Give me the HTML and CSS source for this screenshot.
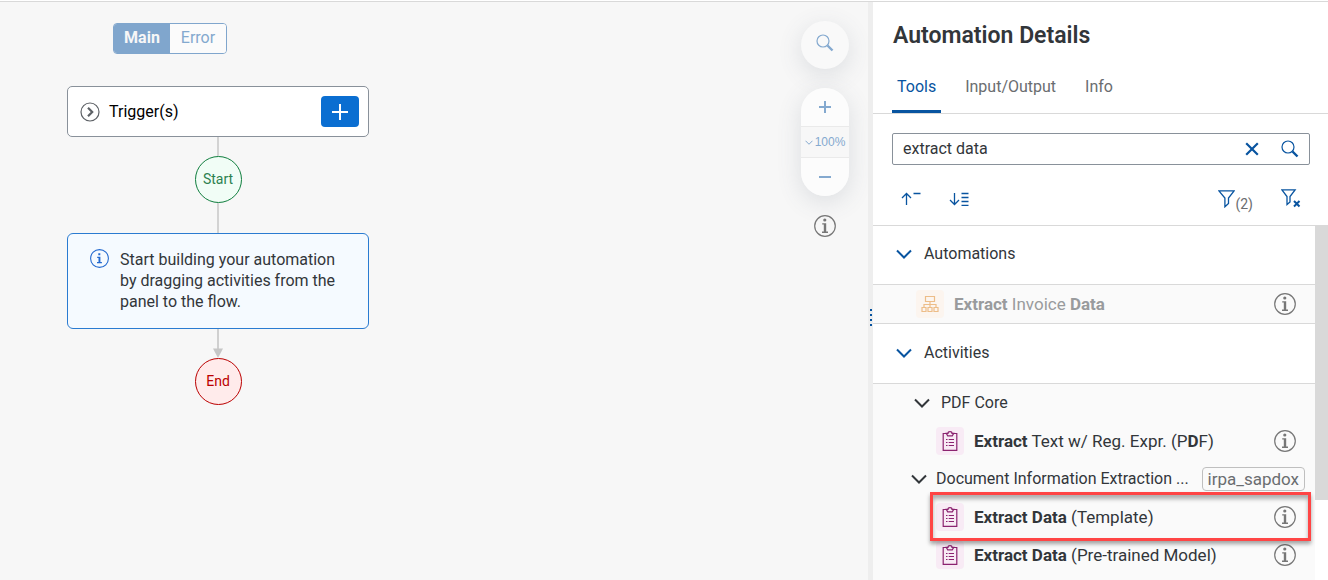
FILE: index.html
```html
<!DOCTYPE html>
<html lang="en">
<head>
<meta charset="utf-8">
<title>Automation Details</title>
<link rel="stylesheet" href="styles.css">
</head>
<body>
<svg class="defs" aria-hidden="true">
  <symbol id="search" viewBox="0 0 18 18"><circle cx="7" cy="7" r="6" fill="none" stroke="currentColor" stroke-width="1.2"/><path d="M11.5 11.5L16.5 16.5" fill="none" stroke="currentColor" stroke-width="2.4"/></symbol>
  <symbol id="info" viewBox="0 0 22 22"><circle cx="11" cy="11" r="10.3" fill="none" stroke="currentColor" stroke-width="1.2"/><circle cx="10.8" cy="5" r="1.6" fill="currentColor"/><path d="M8.200 8.300h4v8.300h1.800v1.300h-6v-1.300h1.800V9.600H8.200z" fill="currentColor"/></symbol>
  <symbol id="chevron" viewBox="0 0 16 10"><path d="M1 1.5L8 8.5L15 1.5" fill="none" stroke="currentColor" stroke-width="2"/></symbol>
  <symbol id="clipboard" viewBox="0 0 16 20"><path d="M4.500 2.500H1.200V19.300H14.800V2.500H11.500" fill="none" stroke="currentColor" stroke-width="1.200"/><path d="M4.300 2.400H6c0-2.400 4-2.400 4 0h1.700L10.300 4.800H5.700z" fill="none" stroke="currentColor" stroke-width="1.200"/><path d="M4 8.500h1.500M4 11.500h1.500M4 14.500h1.500M6.700 8.500H12M6.700 11.500H12M6.700 14.500H12" fill="none" stroke="currentColor" stroke-width="1.200"/></symbol>
  <symbol id="funnel" viewBox="0 0 17 18"><path d="M.9.800H16.100L10.500 8V13.400L6.900 16.800V8z" fill="none" stroke="currentColor" stroke-width="1.300"/></symbol>
</svg>
<div class="app">
  <main class="canvas">
    <section class="flow">
      <div class="toggle">
        <button class="toggle-item selected">Main</button>
        <button class="toggle-item">Error</button>
      </div>
      <div class="trigger">
        <button class="icon-button" aria-label="Expand triggers"><svg width="20" height="20" viewBox="0 0 20 20"><circle cx="10" cy="10" r="9" fill="none" stroke="currentColor" stroke-width="1.2"/><path d="M8 5.800L12.200 10L8 14.200" fill="none" stroke="currentColor" stroke-width="2.200"/></svg></button>
        <span class="trigger-label">Trigger(s)</span>
        <button class="add" aria-label="Add trigger"><svg width="18" height="18" viewBox="0 0 18 18"><path d="M9 1V17M1 9H17" stroke="currentColor" stroke-width="2"/></svg></button>
      </div>
      <div class="line line-short"></div>
      <div class="node start">Start</div>
      <div class="line"></div>
      <div class="hint">
        <svg class="hint-icon" width="19" height="19" viewBox="0 0 19 19"><circle cx="9.500" cy="9.500" r="8.900" fill="none" stroke="currentColor" stroke-width="1.100"/><path d="M8.300 4.200h2v2h-2zM7.200 7.700h3.200v5.300h1.500v1.300H7v-1.300h1.500V9H7.200z" fill="currentColor"/></svg>
        <p class="hint-text">Start building your automation by dragging activities from the panel to the flow.</p>
      </div>
      <svg class="arrow" width="10" height="29" viewBox="0 0 10 29"><path d="M5 0V22" stroke="#d0d0d0" stroke-width="2"/><path d="M0 19.500H10L5 29z" fill="#c6c6c6"/></svg>
      <div class="node end">End</div>
    </section>
    <aside class="tools">
      <button class="round" aria-label="Search"><svg width="18" height="18"><use href="#search"/></svg></button>
      <div class="zoom">
        <button class="zoom-step" aria-label="Zoom in"><svg width="14" height="14" viewBox="0 0 14 14"><path d="M7 1V13M1 7H13" stroke="currentColor" stroke-width="2"/></svg></button>
        <button class="zoom-level"><svg width="8" height="5"><use href="#chevron"/></svg>100%</button>
        <button class="zoom-step" aria-label="Zoom out"><svg width="14" height="14" viewBox="0 0 14 14"><path d="M1 7H13" stroke="currentColor" stroke-width="2"/></svg></button>
      </div>
      <button class="icon-button" aria-label="Information"><svg width="22" height="22"><use href="#info"/></svg></button>
    </aside>
  </main>
  <div class="splitter"><span class="grip"></span></div>
  <section class="panel">
    <h1 class="title">Automation Details</h1>
    <nav class="tabs">
      <a class="tab active" href="#tools">Tools</a>
      <a class="tab" href="#io">Input/Output</a>
      <a class="tab" href="#about">Info</a>
    </nav>
    <div class="controls">
      <div class="search">
        <input class="search-input" type="text" value="extract data" aria-label="Search tools">
        <button class="icon-button" aria-label="Clear"><svg width="14" height="14" viewBox="0 0 14 14"><path d="M1.200 1.200L12.800 12.800M12.800 1.200L1.200 12.800" stroke="currentColor" stroke-width="2.200"/></svg></button>
        <button class="icon-button" aria-label="Search"><svg width="18" height="18"><use href="#search"/></svg></button>
      </div>
      <div class="toolbar">
        <button class="icon-button" aria-label="Collapse all"><svg width="20" height="14" viewBox="0 0 20 14"><path d="M5.500 13V1.500M1 6L5.500 1.500L10 6M12.500 1.500H19.500" fill="none" stroke="currentColor" stroke-width="1.300"/></svg></button>
        <button class="icon-button expand" aria-label="Expand all"><svg width="20" height="14" viewBox="0 0 20 14"><path d="M5.500 1V12.500M1 8L5.500 12.500L10 8M12.500 1.500H19.500M12.500 5.500H19.500M12.500 9.500H19.500M12.500 13.300H19.500" fill="none" stroke="currentColor" stroke-width="1.300"/></svg></button>
        <button class="icon-button filter"><svg width="17" height="18"><use href="#funnel"/></svg><span class="count">(2)</span></button>
        <button class="icon-button" aria-label="Clear filter"><svg width="20" height="20" viewBox="0 0 20 20"><path d="M.9.800H14.100L9 7.500V13L6 15.600V7.500z" fill="none" stroke="currentColor" stroke-width="1.300"/><path d="M13 12L18.500 17.500M18.500 12L13 17.500" stroke="currentColor" stroke-width="2"/></svg></button>
      </div>
    </div>
    <div class="results">
      <div class="list">
        <button class="group"><svg class="chevron" width="16" height="10"><use href="#chevron"/></svg>Automations</button>
        <div class="item disabled">
          <span class="tile orange"><svg width="18" height="18" viewBox="0 0 18 18"><path d="M4.500 1.500h9v5h-9zM9 6.500v6M3 12.500V9.500H15v3M1 12.500h4v4H1zM7 12.500h4v4H7zM13 12.500h4v4h-4z" fill="none" stroke="currentColor" stroke-width="1.200"/></svg></span>
          <span class="name"><b>Extract</b> Invoice <b>Data</b></span>
          <button class="icon-button" aria-label="Details"><svg width="22" height="22"><use href="#info"/></svg></button>
        </div>
        <button class="group"><svg class="chevron" width="16" height="10"><use href="#chevron"/></svg>Activities</button>
        <button class="subgroup core"><svg width="16" height="10"><use href="#chevron"/></svg><span>PDF Core</span></button>
        <div class="item">
          <span class="tile"><svg width="16" height="20"><use href="#clipboard"/></svg></span>
          <span class="name"><b>Extract</b> Text w/ Reg. Expr. (P<b>D</b>F)</span>
          <button class="icon-button" aria-label="Details"><svg width="22" height="22"><use href="#info"/></svg></button>
        </div>
        <button class="subgroup"><svg width="16" height="10"><use href="#chevron"/></svg><span class="sub-name">Document Information Extraction ...</span><span class="badge">irpa_sapdox</span></button>
        <div class="item marked">
          <span class="tile"><svg width="16" height="20"><use href="#clipboard"/></svg></span>
          <span class="name"><b>Extract Data</b> (Template)</span>
          <button class="icon-button" aria-label="Details"><svg width="22" height="22"><use href="#info"/></svg></button>
        </div>
        <div class="item">
          <span class="tile"><svg width="16" height="20"><use href="#clipboard"/></svg></span>
          <span class="name"><b>Extract Data</b> (Pre-trained Model)</span>
          <button class="icon-button" aria-label="Details"><svg width="22" height="22"><use href="#info"/></svg></button>
        </div>
      </div>
      <div class="scrollbar"><div class="thumb"></div></div>
    </div>
  </section>
</div>
</body>
</html>
```
FILE: styles.css
```css
* { box-sizing: border-box; }
body {
  margin: 0;
  padding-top: 1px;
  background: #fff;
  color: #32363a;
  font: 16px/20px Roboto, "Noto Sans", sans-serif;
}
button { margin: 0; padding: 0; border: 0; background: none; font: inherit; color: inherit; }
svg { display: block; flex: none; }
.defs { position: absolute; width: 0; height: 0; }
.app { display: flex; height: calc(100vh - 1px); border-top: 1px solid #d9d9d9; overflow: hidden; }
.icon-button { display: flex; flex: none; color: #0854a0; }

.canvas { display: flex; flex: 1; justify-content: space-between; background: #f7f7f7; padding: 19px 19px 0 67px; }
.flow { display: flex; flex-direction: column; align-items: center; width: 302px; padding-top: 2px; }
.toggle { display: flex; align-self: flex-start; margin-left: 46px; height: 31px; border: 1px solid #80a6cd; border-radius: 4px; overflow: hidden; }
.toggle-item { width: 56px; background: #fbfbfb; color: #84a9cf; padding-bottom: 2px; }
.toggle-item.selected { background: #80a6cd; color: #f7f7f7; font-weight: bold; }
.trigger { display: flex; align-items: center; align-self: stretch; height: 51px; margin-top: 32px; padding: 0 9px 0 12px; background: #fff; border: 1px solid #89919a; border-radius: 5px; }
.trigger .icon-button { color: #5d6166; }
.trigger-label { flex: 1; padding-left: 9px; color: #000; }
.add { display: flex; align-items: center; justify-content: center; width: 38px; height: 31px; border-radius: 4px; background: #0a6ed1; color: #fff; }
.line { width: 2px; height: 30px; background: #d3d3d3; }
.line-short { height: 19px; }
.node { display: flex; align-items: center; justify-content: center; width: 47px; height: 47px; padding-bottom: 2px; border: 1px solid; border-radius: 50%; font-size: 14px; }
.start { background: #f1fdf6; border-color: #107e3e; color: #2d8150; }
.end { background: #ffebeb; border-color: #bb0000; color: #bb0000; }
.hint { display: flex; align-self: stretch; padding: 15px 20px 16px 22px; background: #f5faff; border: 1px solid #2a7bd1; border-radius: 6px; }
.hint-icon { color: #2369cf; }
.hint-text { margin: 0 0 0 11px; line-height: 21px; }

.tools { display: flex; flex-direction: column; align-items: center; gap: 19px; width: 48px; color: #84a9cf; }
.round { display: flex; align-items: center; justify-content: center; width: 48px; height: 48px; padding-bottom: 4px; border-radius: 50%; background: #f9f9f9; box-shadow: 0 6px 24px rgba(80, 95, 110, 0.16); }
.zoom { display: flex; flex-direction: column; width: 48px; border-radius: 24px; overflow: hidden; box-shadow: 0 6px 24px rgba(80, 95, 110, 0.16); }
.zoom-step { display: flex; align-items: center; justify-content: center; height: 38px; background: #fcfcfc; }
.zoom-level { display: flex; align-items: center; justify-content: center; gap: 2px; height: 32px; background: #f7f7f7; border: solid #eaeaea; border-width: 1px 0; font: 12px/16px "Liberation Sans", Arial, sans-serif; }
.tools .icon-button { color: #777; }

.splitter { display: flex; align-items: center; justify-content: center; width: 5px; background: #eee; padding-top: 52px; }
.grip { width: 2px; height: 17px; background: repeating-linear-gradient(#0854a0 0 2px, transparent 2px 5px); }

.panel { display: flex; flex-direction: column; width: 455px; background: #fff; }
.title { margin: 0; padding: 20px 20px 0; font-size: 23px; line-height: 28px; font-weight: 600; }
.tabs { display: flex; gap: 19px; margin-top: 22px; padding: 0 19px; border-bottom: 1px solid #d9d9d9; }
.tab { padding: 5px 5px 13px; color: #6a6d70; text-decoration: none; border-bottom: 3px solid transparent; }
.tab.active { color: #0854a0; border-color: #0854a0; }
.controls { padding: 19px 18px 0 19px; border-bottom: 1px solid #d9d9d9; }
.search { display: flex; align-items: center; height: 32px; border: 1px solid #89919a; border-radius: 2px; padding: 0 10px; gap: 22px; }
.search-input { flex: 1; min-width: 0; border: 0; padding: 0; outline: 0; background: none; font: inherit; color: inherit; }
.toolbar { display: flex; align-items: center; height: 60px; padding: 8px 9px 0; gap: 28px; }
.filter { align-items: center; margin-left: auto; }
.count { align-self: flex-end; height: 14px; color: #6a6d70; font-size: 14px; line-height: 20px; }

.results { display: flex; flex: 1; min-height: 0; }
.list { flex: 1; min-width: 0; background: #fafafa; }
.group { display: flex; align-items: center; width: 100%; height: 59px; padding: 0 23px 2px; gap: 12px; background: #fff; border-bottom: 1px solid #d9d9d9; }
.disabled + .group { height: 60px; }
.chevron { color: #0854a0; }
.item { display: flex; align-items: center; height: 38px; padding: 0 19px 0 63px; position: relative; }
.name { flex: 1; padding-left: 10px; font-size: 17px; white-space: nowrap; }
.item .icon-button { color: #777; }
.tile { display: flex; align-items: center; justify-content: center; width: 28px; height: 28px; border-radius: 4px; background: #f8ebf5; color: #8b2370; }
.disabled { height: 39px; padding-left: 43px; border-bottom: 1px solid #d9d9d9; color: #999b9d; }
.orange { background: #fcf5ef; color: #edbd88; }
.subgroup { display: flex; align-items: center; width: 100%; height: 38px; padding: 0 10px 0 38px; gap: 9px; text-align: left; white-space: nowrap; }
.core { padding-left: 41px; gap: 11px; }
.sub-name { flex: 1; min-width: 0; }
.badge { height: 24px; padding: 0 5px; border: 1px solid #bfbfbf; border-radius: 4px; font-size: 17px; line-height: 22px; color: #6a6d70; }
.marked { z-index: 1; }
.marked::after { content: ""; position: absolute; inset: -6px 4px -5px 57px; border: 3px solid #ff4545; box-shadow: 0 3px 4px rgba(0, 0, 0, 0.35), inset 0 4px 4px rgba(0, 0, 0, 0.3); pointer-events: none; }
.scrollbar { width: 13px; background: #fff; }
.thumb { height: 77.500%; background: #d9d9d9; }
```
